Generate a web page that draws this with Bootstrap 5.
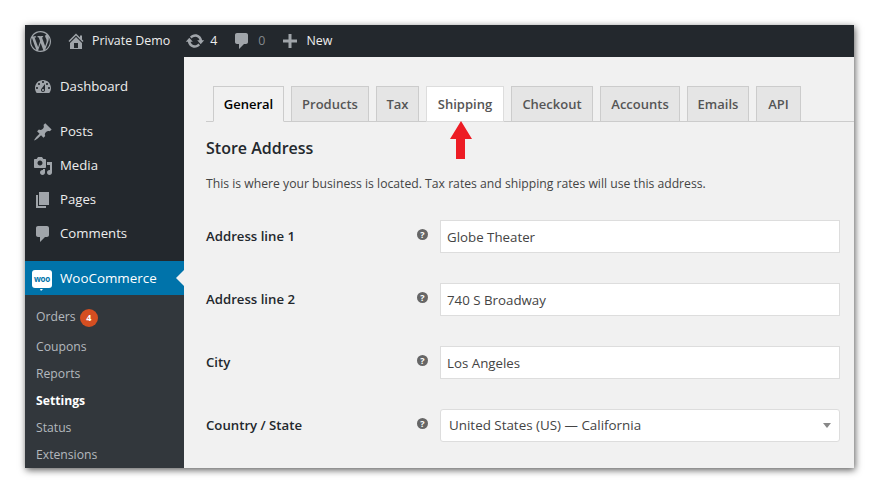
<!DOCTYPE html>
<html>
<head>
    <title>WooCommerce Settings</title>
    <link href="https://cdn.jsdelivr.net/npm/bootstrap@5.3.0/dist/css/bootstrap.min.css" rel="stylesheet">
    <style>
        html, body { height: 100%; }
        body { background: #fff; font-family: "Open Sans", sans-serif; font-size: 13px; color: #444; overflow: hidden; }
        .frame { position: relative; width: 829px; height: 443px; margin: 25px 0 0 25px; box-shadow: 1px 2px 7px rgba(0,0,0,.65); overflow: hidden; background: #f1f1f1; }
        .adminbar { height: 32px; background: #23282d; color: #eee; font-size: 12.4px; padding-left: 5px; }
        .adminbar svg { fill: #a0a5aa; display: block; }
        .adminbar .item { height: 32px; gap: 6px; margin-left: 15px; }
        .adminbar .item.logo { width: 32px; margin-left: 0; }
        .adminbar .item.home { margin-left: 4px; }
        .adminbar .item.updates { gap: 5px; }
        .adminbar .dim { color: #82878c; }
        .shell { height: 411px; }
        .sidemenu { width: 159px; background: #23282d; color: #eee; font-size: 13.2px; flex: none; }
        .sidemenu svg { fill: #a0a5aa; flex: none; display: block; }
        .side-top { padding: 13px 0 10px; }
        .side-link { height: 34px; padding-left: 8px; gap: 7px; }
        .side-link.first { margin-bottom: 11px; }
        .woo-link { height: 34px; background: #0073aa; color: #fff; padding-left: 7px; gap: 8px; position: relative; font-size: 13.4px; }
        .woo-link::after { content: ""; position: absolute; right: 0; top: 9px; border: 8px solid transparent; border-right-color: #f1f1f1; border-left-width: 0; }
        .woo-logo { position: relative; width: 20px; height: 18px; margin-top: 1px; background: #fff; border-radius: 3px; color: #0073aa; font-size: 8px; font-weight: 700; line-height: 17px; text-align: center; letter-spacing: -.2px; }
        .woo-logo::after { content: ""; position: absolute; left: 8px; bottom: -3px; border: 2px solid transparent; border-top-color: #fff; border-bottom-width: 0; border-left-width: 1px; }
        .submenu { background: #32373c; flex: 1; color: #b4b9be; font-size: 12.2px; padding: 8px 0 0 11px; }
        .submenu div { height: 27px; line-height: 27px; }
        .submenu div.orders { height: 30px; line-height: 27px; }
        .submenu .active { color: #fff; font-weight: 700; }
        .count { display: inline-block; width: 18px; height: 18px; margin-left: 1px; border-radius: 50%; background: #d54e21; color: #fff; font-size: 9px; font-weight: 700; line-height: 18px; text-align: center; vertical-align: 0; }
        .content { position: relative; flex: 1; padding: 29px 14px 0 22px; }
        .tabs { height: 36px; gap: 7px; padding-left: 7px; margin-right: -14px; border-bottom: 1px solid #ccc; }
        .tabs a { display: block; flex: none; height: 36px; border: 1px solid #ccc; background: #e5e5e5; color: #555; font-size: 13px; font-weight: 600; line-height: 34px; text-align: center; text-decoration: none; white-space: nowrap; }
        .tabs a:nth-child(1) { width: 71px; }
        .tabs a:nth-child(2) { width: 78px; }
        .tabs a:nth-child(3) { width: 43px; }
        .tabs a:nth-child(4) { width: 78px; }
        .tabs a:nth-child(5) { width: 82px; }
        .tabs a:nth-child(6) { width: 80px; }
        .tabs a:nth-child(7) { width: 62px; }
        .tabs a:nth-child(8) { width: 45px; }
        .tabs a.current { background: #f1f1f1; color: #000; border-bottom-color: #f1f1f1; }
        .tabs a.hilite { background: #fff; border-bottom-color: #fff; border-color: #ddd; }
        h2.store { font-size: 16px; font-weight: 600; color: #23282d; margin: 15px 0 0; line-height: 22px; }
        .intro { font-size: 12.2px; margin: 16px 0 0; line-height: 18px; color: #444; }
        .frow { height: 33px; margin-bottom: 30px; }
        .form-area { margin-top: 27px; }
        .frow label { width: 211px; flex: none; font-size: 13.2px; font-weight: 600; color: #23282d; }
        .help { width: 11px; height: 11px; border-radius: 50%; background: #666; color: #fff; font-size: 9px; font-weight: 700; line-height: 11px; text-align: center; margin: -4px 12px 0 0; flex: none; }
        .frow .form-control, .frow .form-select { width: 400px; height: 33px; flex: none; border: 1px solid #ddd; border-radius: 0; box-shadow: none; padding: 3px 6px; font-size: 13.3px; color: #444; font-family: "Open Sans", sans-serif; }
        .frow .form-select { padding-left: 8px; font-size: 13.4px; border-radius: 3px; background-image: url("data:image/svg+xml,%3Csvg xmlns='http://www.w3.org/2000/svg' width='8' height='5'%3E%3Cpath d='M0 0h8L4 5z' fill='%23888'/%3E%3C/svg%3E"); background-size: 8px 5px; background-position: right 8px center; }
        .arrow { position: absolute; left: 266px; top: 64px; }
    </style>
</head>
<body>
<div class="frame d-flex flex-column">
    <div class="adminbar d-flex align-items-center">
        <div class="item logo d-flex align-items-center">
            <svg width="21" height="21" viewBox="0 0 20 20"><path d="M20 10c0-5.51-4.49-10-10-10C4.48 0 0 4.49 0 10c0 5.52 4.48 10 10 10 5.51 0 10-4.48 10-10zM7.78 15.37L4.37 6.22c.55-.02 1.17-.08 1.17-.08.5-.06.44-1.13-.06-1.11 0 0-1.45.11-2.37.11-.18 0-.37 0-.58-.01C4.12 2.69 6.87 1.11 10 1.11c2.33 0 4.45.87 6.05 2.34-.68-.11-1.65.39-1.65 1.58 0 .74.45 1.36.9 2.1.35.61.55 1.36.55 2.46 0 1.49-1.4 5-1.4 5l-3.03-8.37c.54-.02.82-.17.82-.17.5-.05.44-1.25-.06-1.22 0 0-1.44.12-2.38.12-.87 0-2.33-.12-2.33-.12-.5-.03-.56 1.2-.06 1.22l.92.08 1.26 3.41zM17.41 10c.24-.64.74-1.87.43-4.25.7 1.29 1.05 2.71 1.05 4.25 0 3.29-1.73 6.24-4.4 7.78.97-2.59 1.94-5.2 2.92-7.78zM6.1 18.09C3.12 16.65 1.11 13.53 1.11 10c0-1.3.23-2.48.72-3.59C3.25 10.3 4.67 14.2 6.1 18.09zm4.03-6.63l2.58 6.98c-.86.29-1.76.45-2.71.45-.79 0-1.57-.11-2.29-.33.81-2.38 1.62-4.74 2.42-7.1z"/></svg>
        </div>
        <div class="item home d-flex align-items-center">
            <svg width="20" height="20" viewBox="0 0 20 20"><path d="M16 8.5l1.53 1.53-1.06 1.06L10 4.62l-6.47 6.47-1.06-1.06L10 2.5l4 4v-2h2v4zm-6-2.46l6 5.99V18H4v-5.97zM12 17v-5H8v5h4z"/></svg>
            <span>Private Demo</span>
        </div>
        <div class="item updates d-flex align-items-center">
            <svg width="20" height="20" viewBox="0 0 20 20"><path d="M10.2 3.28c3.53 0 6.43 2.61 6.92 6h2.08l-3.5 4-3.5-4h2.32c-.45-1.97-2.21-3.45-4.32-3.45-1.45 0-2.73.71-3.54 1.78L4.95 5.66C6.23 4.2 8.11 3.28 10.2 3.28zm-.4 13.44c-3.52 0-6.43-2.61-6.92-6H.8l3.5-4c1.17 1.33 2.33 2.67 3.5 4H5.48c.45 1.97 2.21 3.45 4.32 3.45 1.45 0 2.73-.71 3.54-1.78l1.71 1.95c-1.28 1.46-3.15 2.38-5.25 2.38z"/></svg>
            <span>4</span>
        </div>
        <div class="item d-flex align-items-center">
            <svg width="20" height="20" viewBox="0 0 20 20"><path d="M5 2h9c1.1 0 2 .9 2 2v7c0 1.1-.9 2-2 2h-2l-5 5v-5H5c-1.1 0-2-.9-2-2V4c0-1.1.9-2 2-2z"/></svg>
            <span class="dim">0</span>
        </div>
        <div class="item d-flex align-items-center">
            <svg width="20" height="20" viewBox="0 0 20 20"><path d="M17 8.5v3h-5.5V17h-3v-5.5H3v-3h5.5V3h3v5.5z"/></svg>
            <span>New</span>
        </div>
    </div>
    <div class="shell d-flex">
        <div class="sidemenu d-flex flex-column">
            <div class="side-top">
                <div class="side-link first d-flex align-items-center">
                    <svg width="20" height="20" viewBox="0 0 20 20"><path d="M3.76 16h12.48c1.1-1.37 1.76-3.11 1.76-5 0-4.42-3.58-8-8-8s-8 3.58-8 8c0 1.89.66 3.63 1.76 5zM10 4c.55 0 1 .45 1 1s-.45 1-1 1-1-.45-1-1 .45-1 1-1zM6 6c.55 0 1 .45 1 1s-.45 1-1 1-1-.45-1-1 .45-1 1-1zm8 0c.55 0 1 .45 1 1s-.45 1-1 1-1-.45-1-1 .45-1 1-1zm-5.37 5.55L12 7v6c0 1.1-.9 2-2 2s-2-.9-2-2c0-.57.24-1.08.63-1.45zM4 10c.55 0 1 .45 1 1s-.45 1-1 1-1-.45-1-1 .45-1 1-1zm12 0c.55 0 1 .45 1 1s-.45 1-1 1-1-.45-1-1 .45-1 1-1zm-5 3c0-.55-.45-1-1-1s-1 .45-1 1 .45 1 1 1 1-.45 1-1z"/></svg>
                    <span>Dashboard</span>
                </div>
                <div class="side-link d-flex align-items-center">
                    <svg width="20" height="20" viewBox="0 0 20 20"><path d="M10.44 3.02l1.82-1.82 6.36 6.35-1.83 1.82c-1.05-.68-2.48-.57-3.41.36l-.75.75c-.92.93-1.04 2.35-.35 3.41l-1.83 1.82-2.41-2.41-2.8 2.79c-.42.42-3.38 2.71-3.8 2.29s1.86-3.39 2.28-3.81l2.79-2.79L4.1 9.36l1.83-1.82c1.05.69 2.48.57 3.4-.36l.75-.75c.93-.92 1.05-2.35.36-3.41z"/></svg>
                    <span>Posts</span>
                </div>
                <div class="side-link d-flex align-items-center">
                    <svg width="20" height="20" viewBox="0 0 20 20"><path d="M13 11V4c0-.55-.45-1-1-1h-1.67L9 1H5L3.67 3H2c-.55 0-1 .45-1 1v7c0 .55.45 1 1 1h10c.55 0 1-.45 1-1zM7 4.5c1.38 0 2.5 1.12 2.5 2.5S8.38 9.5 7 9.5 4.5 8.38 4.5 7 5.62 4.5 7 4.5zM14 6h5v10.5c0 1.38-1.12 2.5-2.5 2.5S14 17.88 14 16.5s1.12-2.5 2.5-2.5c.17 0 .34.02.5.05V9h-3V6zm-4 8.05V13h2v3.5c0 1.38-1.12 2.5-2.5 2.5S7 17.88 7 16.5 8.12 14 9.5 14c.17 0 .34.02.5.05z"/></svg>
                    <span>Media</span>
                </div>
                <div class="side-link d-flex align-items-center">
                    <svg width="20" height="20" viewBox="0 0 20 20"><path d="M6 15V2h10v13H6zm-1 1h8v2H3V5h2v11z"/></svg>
                    <span>Pages</span>
                </div>
                <div class="side-link d-flex align-items-center">
                    <svg width="20" height="20" viewBox="0 0 20 20"><path d="M5 2h9c1.1 0 2 .9 2 2v7c0 1.1-.9 2-2 2h-2l-5 5v-5H5c-1.1 0-2-.9-2-2V4c0-1.1.9-2 2-2z"/></svg>
                    <span>Comments</span>
                </div>
            </div>
            <div class="woo-link d-flex align-items-center">
                <div class="woo-logo">woo</div>
                <span>WooCommerce</span>
            </div>
            <div class="submenu">
                <div class="orders">Orders <span class="count">4</span></div>
                <div>Coupons</div>
                <div>Reports</div>
                <div class="active">Settings</div>
                <div>Status</div>
                <div>Extensions</div>
            </div>
        </div>
        <div class="content">
            <div class="tabs d-flex">
                <a class="current" href="#">General</a>
                <a href="#">Products</a>
                <a href="#">Tax</a>
                <a class="hilite" href="#">Shipping</a>
                <a href="#">Checkout</a>
                <a href="#">Accounts</a>
                <a href="#">Emails</a>
                <a href="#">API</a>
            </div>
            <svg class="arrow" width="22" height="38" viewBox="0 0 22 38"><path d="M11 0l11 18h-7v20H6V18H0z" fill="#ed1c24"/></svg>
            <h2 class="store">Store Address</h2>
            <p class="intro">This is where your business is located. Tax rates and shipping rates will use this address.</p>
            <div class="form-area">
                <div class="frow d-flex align-items-center">
                    <label>Address line 1</label><span class="help">?</span>
                    <input class="form-control" value="Globe Theater">
                </div>
                <div class="frow d-flex align-items-center">
                    <label>Address line 2</label><span class="help">?</span>
                    <input class="form-control" value="740 S Broadway">
                </div>
                <div class="frow d-flex align-items-center">
                    <label>City</label><span class="help">?</span>
                    <input class="form-control" value="Los Angeles">
                </div>
                <div class="frow d-flex align-items-center">
                    <label>Country / State</label><span class="help">?</span>
                    <select class="form-select"><option>United States (US) — California</option></select>
                </div>
            </div>
        </div>
    </div>
</div>
<script src="https://cdn.jsdelivr.net/npm/bootstrap@5.3.0/dist/js/bootstrap.bundle.min.js"></script>
</body>
</html>
